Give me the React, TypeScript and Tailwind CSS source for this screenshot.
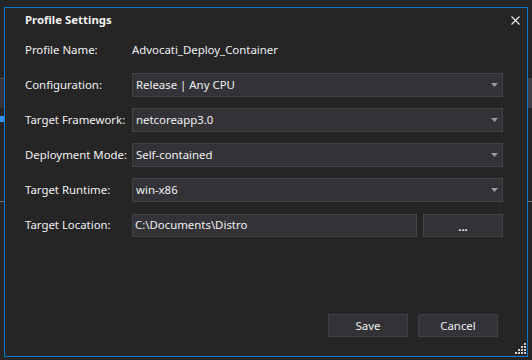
import React from "react";

const fields = [
  { label: "Configuration:", value: "Release | Any CPU" },
  { label: "Target Framework:", value: "netcoreapp3.0" },
  { label: "Deployment Mode:", value: "Self-contained" },
  { label: "Target Runtime:", value: "win-x86" },
];

function Arrow() {
  return (
    <svg width="7" height="4" viewBox="0 0 7 4" className="shrink-0">
      <path d="M0 0h7L3.5 4z" fill="#999999" />
    </svg>
  );
}

function Select({ value }: { value: string }) {
  return (
    <div className="flex h-[24px] flex-1 items-center justify-between border border-[#434346] bg-[#333337] pl-[3px] pr-[4px]">
      <span>{value}</span>
      <Arrow />
    </div>
  );
}

function Grip() {
  const dots: [number, number][] = [];
  for (let r = 0; r < 4; r++) {
    for (let c = 3 - r; c < 4; c++) dots.push([c * 3, r * 3]);
  }
  return (
    <svg width="11" height="11" viewBox="0 0 11 11" className="absolute bottom-[2px] right-[1px]">
      {dots.map(([x, y]) => (
        <rect key={`${x}-${y}`} x={x} y={y} width="2" height="2" fill="#d0d0d0" />
      ))}
    </svg>
  );
}

export default function App() {
  return (
    <div
      className="relative h-[360px] w-[532px] overflow-hidden bg-[#252526] text-[11.4px] text-[#f1f1f1]"
      style={{ fontFamily: '"Noto Sans", "Liberation Sans", sans-serif' }}
    >
      {/* bits of the window behind */}
      <div className="absolute left-0 top-[78px] h-[30px] w-[4px] border-t border-[#55555a] bg-[#333337]" />
      <div className="absolute left-0 top-[116px] h-[6px] w-[4px] bg-[#3794ff]" />
      <div className="absolute left-0 top-[201px] h-px w-[4px] bg-[#777777]" />
      <div className="absolute right-0 top-[78px] h-[30px] w-[4px] bg-[#3f3f46]" />
      <div className="absolute right-0 top-[201px] h-px w-[4px] bg-[#777777]" />

      <div className="absolute left-[4px] top-[7px] flex h-[350px] w-[524px] flex-col border border-[#007acc] bg-[#252526] pl-[20px] pr-[24px] pt-[4px] pb-[19px]">
        <div className="flex h-[16px] items-center justify-between leading-[16px]">
          <span className="font-bold">Profile Settings</span>
          <svg width="9" height="9" viewBox="0 0 9 9" className="mr-[-17px]">
            <path d="M0.5 0.5l8 8M8.5 0.5l-8 8" stroke="#f1f1f1" strokeWidth="1.1" />
          </svg>
        </div>

        <div className="mt-[14px] flex h-[16px] items-center leading-[16px]">
          <span className="w-[107px] shrink-0 whitespace-nowrap">Profile Name:</span>
          <span>Advocati_Deploy_Container</span>
        </div>

        <div className="mt-[15px] flex flex-col gap-[11px]">
          {fields.map((f) => (
            <div key={f.label} className="flex items-center">
              <span className="w-[107px] shrink-0 whitespace-nowrap">{f.label}</span>
              <Select value={f.value} />
            </div>
          ))}
          <div className="flex items-center">
            <span className="w-[107px] shrink-0 whitespace-nowrap">Target Location:</span>
            <div className="mt-[1px] flex h-[23px] flex-1 items-center border border-[#434346] bg-[#333337] pb-[2px] pl-[2px]">
              C:\Documents\Distro
            </div>
            <button className="ml-[6px] mt-[1px] flex h-[23px] w-[80px] items-center justify-center border border-[#434346] bg-[#333337] pt-[3px] font-bold leading-none">
              ...
            </button>
          </div>
        </div>

        <div className="mt-auto mr-[5px] flex justify-end gap-[10px]">
          <button className="h-[23px] w-[80px] border border-[#3f3f46] bg-[#333337]">Save</button>
          <button className="h-[23px] w-[80px] border border-[#3f3f46] bg-[#333337]">Cancel</button>
        </div>

        <Grip />
      </div>
    </div>
  );
}
